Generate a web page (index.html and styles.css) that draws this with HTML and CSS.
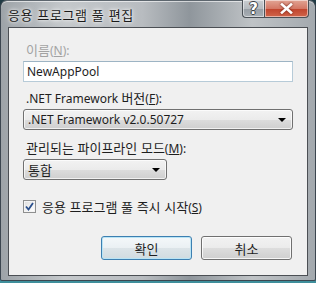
FILE: index.html
```html
<!DOCTYPE html>
<html lang="ko">
<head>
    <meta charset="UTF-8">
    <title>응용 프로그램 풀 편집</title>
    <link rel="stylesheet" href="styles.css">
</head>
<body>
    <div class="window">
        <div class="titlebar">
            <div class="title">응용 프로그램 풀 편집</div>
            <div class="caption-buttons">
                <div class="cap-btn help-btn"><span class="help-glyph">?</span></div>
                <div class="cap-btn close-btn">
                    <svg width="13" height="11" viewBox="0 0 13 11">
                        <path d="M2 1.5 L11 9.5 M11 1.5 L2 9.5" stroke="#fff" stroke-width="2.6" stroke-linecap="square"/>
                    </svg>
                </div>
            </div>
        </div>

        <div class="client">
            <div class="label disabled"><span class="ko">이름</span>(<u>N</u>):</div>
            <div class="textbox">NewAppPool</div>

            <div class="label">.NET Framework <span class="ko">버전</span>(<u>F</u>):</div>
            <div class="combo wide">
                <span>.NET Framework v2.0.50727</span>
                <span class="arrow"></span>
            </div>

            <div class="label"><span class="ko">관리되는 파이프라인 모드</span>(<u>M</u>):</div>
            <div class="combo narrow">
                <span class="ko">통합</span>
                <span class="arrow"></span>
            </div>

            <div class="check-row">
                <span class="checkbox">
                    <svg width="9" height="9" viewBox="0 0 9 9">
                        <path d="M1 4.5 L3.5 7.5 L8 1" fill="none" stroke="#2a4f8c" stroke-width="1.8"/>
                    </svg>
                </span>
                <span><span class="ko">응용 프로그램 풀 즉시 시작</span>(<u>S</u>)</span>
            </div>

            <div class="buttons">
                <button class="btn default">확인</button>
                <button class="btn">취소</button>
            </div>
        </div>
    </div>
</body>
</html>
```

FILE: styles.css
```css
* {
    margin: 0;
    padding: 0;
    box-sizing: border-box;
}

body {
    width: 316px;
    height: 283px;
    background: linear-gradient(#1f3a44 0, #3f8f9c 100%);
    font-family: "Noto Sans", "Noto Sans CJK KR", sans-serif;
    font-size: 12px;
    color: #1e1e1e;
    overflow: hidden;
}

.window {
    width: 316px;
    height: 281px;
    padding: 0 7px 5px 7px;
    border-radius: 7px 7px 2px 2px;
    border: 1px solid #3c4650;
    border-top-color: #5d666e;
    background: linear-gradient(90deg, #9da3a8 0%, #c4c8cb 20%, #b8bcc0 45%, #8f969c 60%, #bfc3c6 80%, #a3a9ae 100%);
    box-shadow: inset 0 1px 0 rgba(255, 255, 255, 0.6);
}

.titlebar {
    height: 26px;
    display: flex;
    justify-content: space-between;
    align-items: flex-start;
}

.title {
    padding-top: 4px;
    font-family: "Noto Sans CJK KR", sans-serif;
    font-size: 13px;
    letter-spacing: 0.6px;
    color: #1a1a1a;
    text-shadow: 0 0 6px #fff, 0 0 3px #fff;
}

.caption-buttons {
    display: flex;
    flex-shrink: 0;
    margin-right: -1px;
    margin-top: -1px;
}

.cap-btn {
    height: 18px;
    display: flex;
    align-items: center;
    justify-content: center;
    border: 1px solid #4a5056;
    border-top: none;
    box-shadow: inset 0 0 0 1px rgba(255, 255, 255, 0.5);
}

.help-btn {
    width: 22px;
    border-radius: 0 0 0 4px;
    border-right: none;
    background: linear-gradient(#c9cdd1 0, #b6bbc0 50%, #979ea5 51%, #a8aeb4 100%);
}

.help-glyph {
    display: block;
    font-family: "DejaVu Sans", sans-serif;
    font-weight: bold;
    font-size: 15px;
    line-height: 16px;
    color: #ffffff;
    text-shadow: 1px 0 0 #3a3f44, -1px 0 0 #3a3f44, 0 1px 0 #3a3f44, 0 -1px 0 #3a3f44;
}

.close-btn {
    width: 45px;
    border-radius: 0 0 4px 0;
    background: linear-gradient(#e2a595 0, #d47865 50%, #c0432c 51%, #d0654a 100%);
}

.close-btn svg {
    filter: drop-shadow(0 0 1px #6a1d10);
}

.client {
    height: 249px;
    background: #f0f0f0;
    border: 1px solid #4b4f54;
    padding: 14px 14px 0 14px;
}

.ko {
    font-family: "Noto Sans CJK KR", sans-serif;
    font-size: 13px;
}

.label {
    height: 16px;
    line-height: 16px;
    padding-left: 3px;
    margin-bottom: 3px;
}

.label u {
    text-underline-offset: 1px;
}

.disabled {
    color: #a3a3a3;
}

.textbox {
    width: 270px;
    height: 21px;
    line-height: 19px;
    padding-left: 3px;
    background: #fff;
    border: 1px solid #b7cbd8;
    border-top-color: #9db4c4;
    margin-bottom: 8px;
}

.combo {
    height: 21px;
    display: flex;
    align-items: center;
    justify-content: space-between;
    padding: 0 4px 0 4px;
    border: 1px solid #707070;
    border-radius: 3px;
    background: linear-gradient(#f2f2f2 0, #ebebeb 50%, #dddddd 51%, #cfcfcf 100%);
    box-shadow: inset 0 0 0 1px rgba(255, 255, 255, 0.7);
    margin-bottom: 10px;
}

.combo.wide {
    width: 270px;
}

.combo.narrow {
    width: 144px;
    margin-bottom: 18px;
}

.arrow {
    width: 0;
    height: 0;
    margin-right: 2px;
    border-left: 4px solid transparent;
    border-right: 4px solid transparent;
    border-top: 4px solid #000;
}

.check-row {
    display: flex;
    align-items: center;
    gap: 6px;
    height: 16px;
}

.checkbox {
    width: 13px;
    height: 13px;
    display: flex;
    align-items: center;
    justify-content: center;
    border: 1px solid #8e8f8f;
    background: linear-gradient(135deg, #dcdcdc 0, #f4f4f4 60%, #ffffff 100%);
    box-shadow: inset 0 0 0 1px #f4f4f4;
}

.buttons {
    display: flex;
    justify-content: flex-end;
    gap: 9px;
    margin-top: 22px;
    padding-right: 1px;
}

.btn {
    width: 91px;
    height: 24px;
    font-family: "Noto Sans CJK KR", sans-serif;
    font-size: 13px;
    color: #1e1e1e;
    border: 1px solid #707070;
    border-radius: 3px;
    background: linear-gradient(#f2f2f2 0, #ebebeb 50%, #dddddd 51%, #cfcfcf 100%);
    box-shadow: inset 0 0 0 1px rgba(255, 255, 255, 0.8);
}

.btn.default {
    border-color: #3c7fb1;
    background: linear-gradient(#f4f8fa 0, #eaf0f3 50%, #dce4e8 51%, #d0dbe0 100%);
    box-shadow: inset 0 0 0 1px #b9e4f5;
}
```
